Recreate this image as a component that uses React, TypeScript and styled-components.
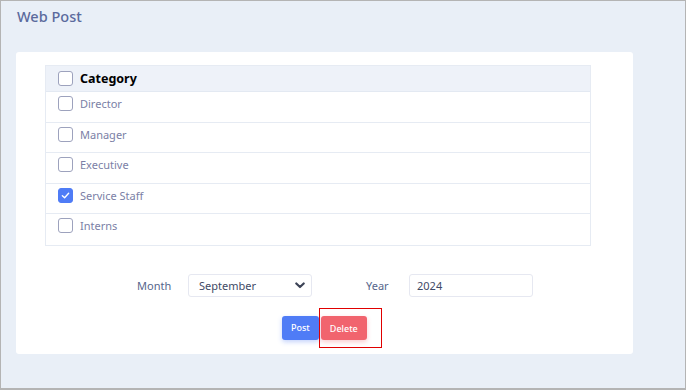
import styled, { createGlobalStyle } from "styled-components";

const GlobalStyle = createGlobalStyle`
  * { box-sizing: border-box; }
  html, body { margin: 0; padding: 0; }
  body {
    font-family: "Noto Sans", "Open Sans", sans-serif;
    background: #ffffff;
  }
`;

const categories = [
    { name: "Director", checked: false },
    { name: "Manager", checked: false },
    { name: "Executive", checked: false },
    { name: "Service Staff", checked: true },
    { name: "Interns", checked: false },
];

function CheckIcon() {
    return (
        <svg width="9" height="9" viewBox="0 0 10 10" fill="none">
            <path d="M1.5 5.2 L4 7.5 L8.5 2.5" stroke="#fff" strokeWidth="1.5" strokeLinecap="round" strokeLinejoin="round" />
        </svg>
    );
}

function ChevronIcon() {
    return (
        <svg width="10" height="7" viewBox="0 0 10 7" fill="none">
            <path d="M1.3 1.5 L5 5 L8.7 1.5" stroke="#3c4356" strokeWidth="2.2" strokeLinecap="round" strokeLinejoin="round" />
        </svg>
    );
}

export default function App() {
    return (
        <>
            <GlobalStyle />
            <Page>
                <Title>Web Post</Title>
                <Card>
                    <Table>
                        <HeaderRow>
                            <Box />
                            <HeaderText>Category</HeaderText>
                        </HeaderRow>
                        {categories.map((c) => (
                            <Row key={c.name}>
                                <Box checked={c.checked}>{c.checked && <CheckIcon />}</Box>
                                <RowText>{c.name}</RowText>
                            </Row>
                        ))}
                    </Table>
                    <FilterRow>
                        <Label>Month</Label>
                        <Select>
                            <span>September</span>
                            <ChevronIcon />
                        </Select>
                        <Label $wide>Year</Label>
                        <Input>2024</Input>
                    </FilterRow>
                    <ButtonRow>
                        <Button $color="#4f7cf6">Post</Button>
                        <Highlighted>
                            <Button $color="#f1646e">Delete</Button>
                        </Highlighted>
                    </ButtonRow>
                </Card>
            </Page>
        </>
    );
}

const Page = styled.div`
    width: 686px;
    height: 390px;
    background: #e9eff7;
    border: 1px solid #b4b4b4;
    border-bottom-width: 2px;
    padding: 5px 52px 0 15px;
`;

const Title = styled.h1`
    margin: 0 0 0 1px;
    font-size: 14.5px;
    font-weight: 500;
    color: #5b6a9d;
    line-height: 20px;
`;

const Card = styled.div`
    margin-top: 26px;
    background: #ffffff;
    border-radius: 3px;
    height: 302px;
    padding: 13px 42px 0 29px;
`;

const Table = styled.div`
    border: 1px solid #e6ebf3;
`;

const HeaderRow = styled.div`
    display: flex;
    align-items: center;
    gap: 7px;
    height: 26px;
    padding: 0 12px;
    background: #eef2f9;
    border-bottom: 1px solid #e3e9f2;
`;

const Row = styled.div`
    display: flex;
    align-items: flex-start;
    gap: 7px;
    height: 30.6px;
    padding: 4px 12px 0;
    border-bottom: 1px solid #e6ebf3;
    &:last-child { border-bottom: none; }
`;

const Box = styled.div<{ checked?: boolean }>`
    width: 15px;
    height: 15px;
    flex: none;
    border-radius: 3px;
    border: 1px solid ${(p) => (p.checked ? "#4f7cf6" : "#9da2bd")};
    background: ${(p) => (p.checked ? "#4f7cf6" : "#fff")};
    display: flex;
    align-items: center;
    justify-content: center;
`;

const HeaderText = styled.span`
    font-size: 12.5px;
    font-weight: 700;
    color: #000;
`;

const RowText = styled.span`
    font-size: 11px;
    color: #7b7fa6;
    line-height: 15px;
`;

const FilterRow = styled.div`
    display: flex;
    align-items: center;
    margin-top: 28px;
    padding-left: 92px;
`;

const Label = styled.span<{ $wide?: boolean }>`
    font-size: 11px;
    color: #56668c;
    width: ${(p) => (p.$wide ? "43px" : "51px")};
    margin-left: ${(p) => (p.$wide ? "54px" : "0")};
`;

const Select = styled.div`
    width: 124px;
    height: 23px;
    border: 1px solid #e6e8f1;
    border-radius: 3px;
    display: flex;
    align-items: center;
    justify-content: space-between;
    padding: 0 6px 0 10px;
    font-size: 11px;
    color: #3f4a66;
`;

const Input = styled.div`
    width: 124px;
    height: 23px;
    border: 1px solid #e6e8f1;
    border-radius: 3px;
    display: flex;
    align-items: center;
    padding: 0 7px;
    font-size: 11px;
    color: #3f4a66;
`;

const ButtonRow = styled.div`
    display: flex;
    align-items: center;
    gap: 2px;
    margin-top: 18px;
    padding-left: 237px;
`;

const Highlighted = styled.div`
    position: relative;
    &::after {
        content: "";
        position: absolute;
        left: -2px;
        top: -7px;
        width: 61px;
        height: 38px;
        border: 1px solid #e00000;
        pointer-events: none;
    }
`;

const Button = styled.button<{ $color: string }>`
    border: none;
    height: 24px;
    padding: 0 9px;
    border-radius: 3px;
    background: ${(p) => p.$color};
    color: #fff;
    font-family: inherit;
    font-size: 9px;
    font-weight: 500;
    box-shadow: 0 2px 5px ${(p) => p.$color}55;
`;
